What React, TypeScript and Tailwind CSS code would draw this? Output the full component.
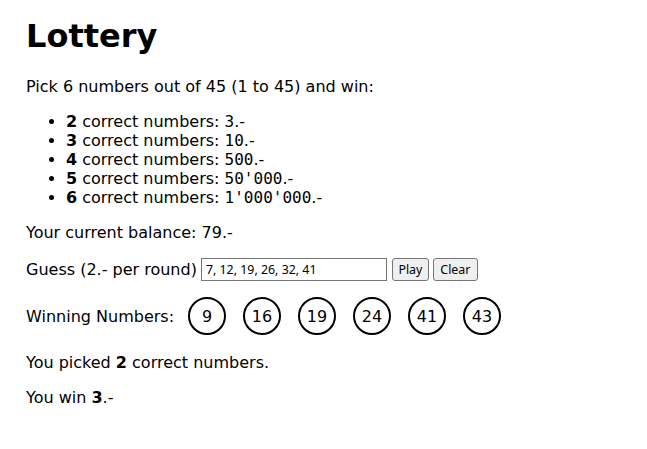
import { useState } from "react";

const prizes = [
  { n: 2, amount: "3" },
  { n: 3, amount: "10" },
  { n: 4, amount: "500" },
  { n: 5, amount: "50'000" },
  { n: 6, amount: "1'000'000" },
];

const winning = [9, 16, 19, 24, 41, 43];

export default function App() {
  const [guess, setGuess] = useState("7, 12, 19, 26, 32, 41");

  return (
    <div className="min-h-screen bg-white text-black px-[26px] pt-[18px] font-['DejaVu_Sans',sans-serif] text-[16px] leading-[19px]">
      <h1 className="text-[32px] font-bold leading-[37px]">Lottery</h1>
      <p className="mt-[22px]">Pick 6 numbers out of 45 (1 to 45) and win:</p>
      <ul className="mt-[16px] list-disc pl-[40px]">
        {prizes.map((p) => (
          <li key={p.n}>
            <b>{p.n}</b> correct numbers: <code className="font-['DejaVu_Sans_Mono',monospace]">{p.amount}</code>.-
          </li>
        ))}
      </ul>
      <p className="mt-[16px]">Your current balance: 79.-</p>
      <div className="mt-[13px] flex items-center h-[28px]">
        <span>Guess (2.- per round)</span>
        <input
          value={guess}
          onChange={(e) => setGuess(e.target.value)}
          className="ml-[4px] w-[186px] h-[23px] border border-[#767676] px-[4px] text-[12.4px] font-['Noto_Sans',sans-serif] outline-none"
        />
        <button className="ml-[5px] w-[37px] h-[23px] rounded-[3px] border border-[#767676] bg-[#efefef] text-[12.4px] font-['Noto_Sans',sans-serif]">
          Play
        </button>
        <button className="ml-[4px] w-[45px] h-[23px] rounded-[3px] border border-[#767676] bg-[#efefef] text-[12.4px] font-['Noto_Sans',sans-serif]">
          Clear
        </button>
      </div>
      <div className="mt-[14px] flex items-center">
        <span>Winning Numbers:</span>
        <div className="ml-[14px] flex gap-[17px]">
          {winning.map((w) => (
            <div
              key={w}
              className="w-[38px] h-[38px] rounded-full border-2 border-black flex items-center justify-center"
            >
              {w}
            </div>
          ))}
        </div>
      </div>
      <p className="mt-[18px]">
        You picked <b>2</b> correct numbers.
      </p>
      <p className="mt-[16px]">
        You win <b>3</b>.-
      </p>
    </div>
  );
}
